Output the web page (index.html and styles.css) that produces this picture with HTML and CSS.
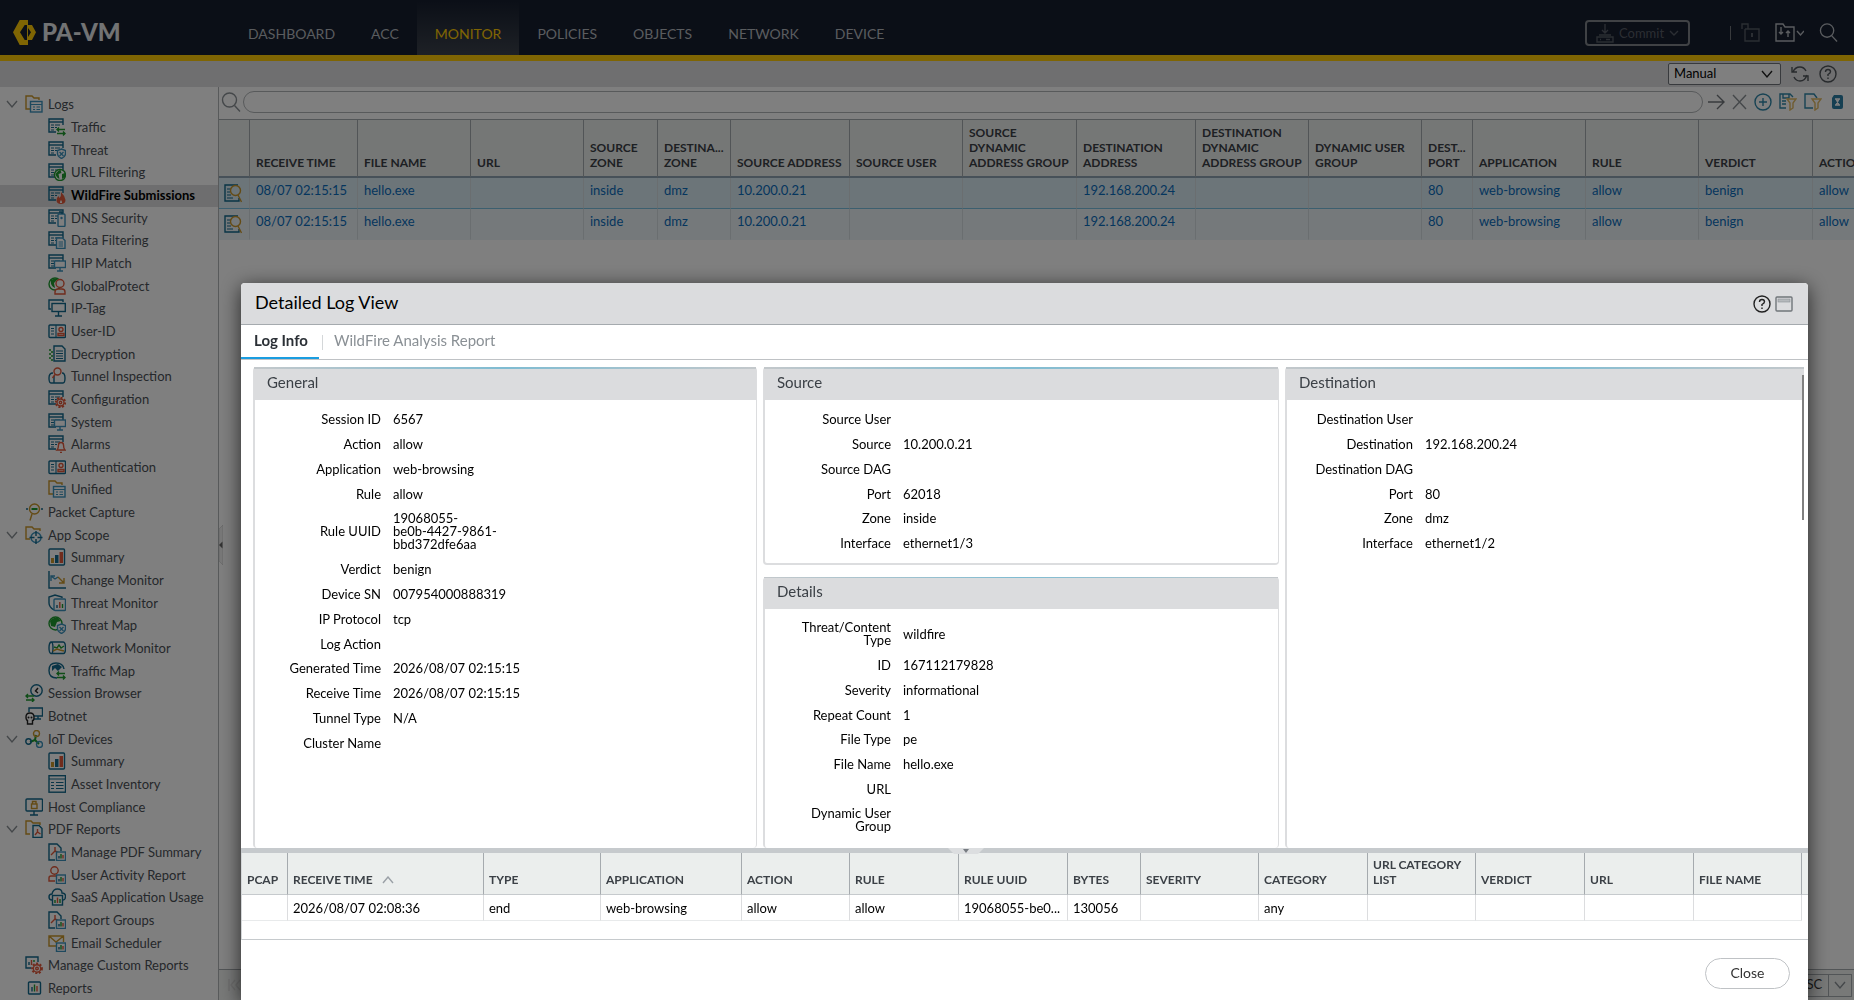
FILE: index.html
```html
<!DOCTYPE html>
<html lang="en">
<head>
<meta charset="utf-8">
<title>PA-VM - Monitor</title>
<link rel="stylesheet" href="styles.css">
</head>
<body>
<svg class="sprite" aria-hidden="true">
  <symbol id="base" viewBox="0 0 18 18"><path d="M8 14H1V1h14v6" class="s teal"/><path d="M1 4h14" class="s teal"/><path d="M3 7h3M7 7h5M3 9.500h3M7 9.500h2M3 12h3" class="s teal thin"/></symbol>
  <symbol id="i-folderlog" viewBox="0 0 18 18"><path d="M5 14H1V1h6l2 2h5v2" class="s gold"/><rect x="5.500" y="6.500" width="11.500" height="10.500" class="s sky"/><path d="M5.500 9.500H17M8 12h2M11.500 12H15M8 14.500h2M11.500 14.500H15" class="s sky thin"/></symbol>
  <symbol id="i-traffic" viewBox="0 0 18 18"><use href="#base"/><path d="M17 11.500H9M11 9.500l-2 2 2 2M9 15.500h8M15 13.500l2 2-2 2" class="s green"/></symbol>
  <symbol id="i-threat" viewBox="0 0 18 18"><use href="#base"/><path d="M13.500 8l4 1.500v3q0 3-4 5-4-2-4-5v-3z" class="s sky white"/><path d="M11.500 11l4 4M15.500 11l-4 4" class="s sky"/></symbol>
  <symbol id="i-url" viewBox="0 0 18 18"><use href="#base"/><circle cx="12" cy="12" r="5.500" class="s green white"/><path d="M7.500 11q3-4 5-4l1 3-3 1 1 5q-3-1-4-5zM14 11l3-1v4l-3 2z" class="f-green"/></symbol>
  <symbol id="i-wildfire" viewBox="0 0 18 18"><use href="#base"/><path d="M13 6q4 4 4.500 8 0 4-4.500 4-4.500 0-4.500-4 0-2 2-4l1 2q2-2 1.500-6z" class="f-red"/><path d="M13 14q1 1 1 3h-2q0-2 1-3z" class="f-white"/></symbol>
  <symbol id="i-dns" viewBox="0 0 18 18"><use href="#base"/><rect x="10" y="5" width="7" height="12.500" rx="1" class="s sky white"/><circle cx="13.500" cy="9" r="1.200" class="f-sky"/><path d="M11 3h3v2" class="s teal"/></symbol>
  <symbol id="i-data" viewBox="0 0 18 18"><use href="#base"/><path d="M8.500 7h6L17 9.500v8H8.500z" class="s sky white"/><path d="M10.500 11H15M10.500 13H15M10.500 15H15" class="s sky thin"/></symbol>
  <symbol id="i-hip" viewBox="0 0 18 18"><use href="#base"/><rect x="6.500" y="7" width="11" height="6.500" class="s sky white"/><path d="M12 13.500V17M9 17h6" class="s sky"/></symbol>
  <symbol id="i-gp" viewBox="0 0 18 18"><circle cx="7" cy="7" r="6" class="s green"/><path d="M3 3q4-2 7-1L6 6l1 5q-5-2-4-8z" class="f-green"/><circle cx="12" cy="6.500" r="4" class="s red white"/><path d="M7 17v-2q0-3 3-3h4q3 0 3 3v2z" class="s red white"/></symbol>
  <symbol id="i-iptag" viewBox="0 0 18 18"><path d="M3 10H1V1h14v2" class="s teal"/><rect x="4" y="4.500" width="13.300" height="8" class="s teal"/><path d="M10.500 12.500V17M7 17h7" class="s teal"/></symbol>
  <symbol id="i-userid" viewBox="0 0 18 18"><rect x="1" y="3" width="16.500" height="12.500" rx="1" class="s teal"/><path d="M8 3v12.500M3 6.500h3M3 9h3M3 12h3" class="s teal thin"/><circle cx="13" cy="7.500" r="2" class="s red"/><path d="M10 13.500v-2h6v2z" class="s red"/></symbol>
  <symbol id="i-decrypt" viewBox="0 0 18 18"><path d="M6 1h8l3 3v12H6z" class="s teal"/><path d="M8 6h7M8 8.500h7M8 11h7M8 13.500h7" class="s teal thin"/><path d="M1 5h2M3 7h2M1 9h2M3 11h2M1 13h2M3 15h2" class="s green"/></symbol>
  <symbol id="i-tunnel" viewBox="0 0 18 18"><path d="M5 6q-4 0-4 5t2 5h12q2 0 2-5t-3-5M6 16V9" class="s teal"/><circle cx="9.500" cy="4.500" r="3.500" class="s red"/><path d="M7 7.500L4.500 11" class="s red"/></symbol>
  <symbol id="i-config" viewBox="0 0 18 18"><use href="#base"/><circle cx="12.500" cy="12.500" r="4.700" class="s red white dash"/><circle cx="12.500" cy="12.500" r="3.500" class="s red"/><circle cx="12.500" cy="12.500" r="1.200" class="s red"/></symbol>
  <symbol id="i-alarm" viewBox="0 0 18 18"><use href="#base"/><path d="M9 15q1.500-1.500 1.500-5 0-2.500 2.500-2.500t2.500 2.500q0 3.500 1.500 5zM12 17.500h2" class="s red white"/></symbol>
  <symbol id="i-packet" viewBox="0 0 18 18"><circle cx="9.500" cy="6" r="5" class="s gold"/><path d="M7 11L5 17.500" class="s gold"/><path d="M6.500 6h6" class="s green wide"/><path d="M1 6h2M16 6h2" class="s teal"/></symbol>
  <symbol id="i-scope" viewBox="0 0 18 18"><path d="M5 13H1V1h6l2 2h6v2" class="s gold"/><circle cx="11" cy="11.500" r="5" class="s sky"/><path d="M11 5v5M11 13v5M4.500 11.500h5M12.500 11.500h5" class="s teal"/></symbol>
  <symbol id="i-summary" viewBox="0 0 18 18"><rect x="1" y="1" width="15.500" height="16" rx="1" class="s teal"/><path d="M3 10h3v5H3z" class="f-gold"/><path d="M7 7h3.500v8H7z" class="f-teal"/><path d="M11.500 4H15v11h-3.500z" class="f-red"/></symbol>
  <symbol id="i-change" viewBox="0 0 18 18"><path d="M1 0v17h17" class="s teal"/><path d="M3 10V5h4M3 5l4 3 3-2" class="s sky"/><path d="M10 6l6 6M16 7v5h-5" class="s gold"/></symbol>
  <symbol id="i-tmon" viewBox="0 0 18 18"><path d="M6 16q-5-3-5-7V3l6-2 7 2v1" class="s teal"/><rect x="6" y="5" width="11.500" height="11.500" rx="1" class="s sky"/><path d="M9 14v-3" class="s teal"/><path d="M11.800 14V8" class="s red"/><path d="M14.500 14v-4" class="s green"/></symbol>
  <symbol id="i-tmap" viewBox="0 0 18 18"><circle cx="7.500" cy="7.500" r="6.500" class="s green"/><path d="M2 5q3-4 8-3l3 3-4 1-2 5-4-1z" class="f-green"/><path d="M13.500 8l4 1.500v3q0 3-4 5-4-2-4-5v-3z" class="s sky white"/><path d="M11.500 11l4 4M15.500 11l-4 4" class="s sky"/></symbol>
  <symbol id="i-nmon" viewBox="0 0 18 18"><path d="M3 3h12q2.500 0 2.500 6T15 14.500H3Q1 14 1 9t2-6q2 0 2 6t-2 5.500" class="s teal"/><path d="M6 8l3 1 2-3 2 3 3-2" class="s green"/><path d="M5 12l4-2 3 1 4 1" class="s gold"/></symbol>
  <symbol id="i-trmap" viewBox="0 0 18 18"><path d="M9 16Q1 16 1 8.500T8 1q7 0 8 6" class="s teal"/><path d="M4 4l6-2 4 3-4 4-3-3-3 3z" class="f-teal"/><path d="M17 11.500H9M11 9.500l-2 2 2 2M9 15.500h8M15 13.500l2 2-2 2" class="s green"/></symbol>
  <symbol id="i-session" viewBox="0 0 18 18"><circle cx="11.500" cy="6.500" r="5.700" class="s teal"/><path d="M13 4l-2.500 3 2.500 2" class="s dark"/><path d="M9 12H1M3 10l-2 2 2 2M1 16h8M7 14l2 2-2 2" class="s green"/></symbol>
  <symbol id="i-botnet" viewBox="0 0 18 18"><path d="M4 5V1h13.500v8H9M13 9v3M9 12h7" class="s teal"/><path d="M1 10q0-4 4-4t4 4-1.500 3.500V17h-5v-3.500Q1 13 1 10z" class="s dark white"/><circle cx="3.500" cy="10.500" r="1" class="f-dark"/><circle cx="6.500" cy="10.500" r="1" class="f-dark"/></symbol>
  <symbol id="i-iot" viewBox="0 0 18 18"><path d="M11 5l-1 5-5 2M10 10l4 4" class="s green wide"/><circle cx="11.500" cy="3.500" r="3" class="s gold"/><circle cx="3.500" cy="11.500" r="2.700" class="s teal"/><circle cx="14.500" cy="14.500" r="3" class="s sky"/></symbol>
  <symbol id="i-asset" viewBox="0 0 18 18"><rect x="1" y="0.700" width="16.500" height="16.500" class="s teal"/><path d="M1 4h16.500M3 7.500h3M8 7.500h7.500M3 10.500h3M8 10.500h7.500M3 13.500h3M8 13.500h7.500" class="s teal thin"/></symbol>
  <symbol id="i-host" viewBox="0 0 18 18"><rect x="1" y="1" width="16.500" height="12" rx="1" class="s teal"/><path d="M9 13v4M5 17h8" class="s teal"/><rect x="6.500" y="6" width="5.500" height="4.500" class="s gold"/><path d="M7.500 6V3.500h3.500V6" class="s gold"/></symbol>
  <symbol id="i-pdf" viewBox="0 0 18 18"><path d="M5 14H1V1h5l2 2h7v2" class="s gold"/><path d="M8 5.500h6l3 3v9H8z" class="s teal white"/><path d="M10 15l2.500-3v-3M12.500 12l3 2" class="s red"/></symbol>
  <symbol id="minichart" viewBox="0 0 18 18"><rect x="8.500" y="9" width="9" height="8.500" class="s sky white"/><path d="M11 15.500V13" class="s teal"/><path d="M13 15.500V11" class="s green"/><path d="M15 15.500V12" class="s red"/></symbol>
  <symbol id="i-mpdf" viewBox="0 0 18 18"><path d="M7 17H1V1h8l4 4v3" class="s teal"/><path d="M3 12l4-4V4M7 8l4 2" class="s red"/><use href="#minichart"/></symbol>
  <symbol id="i-uar" viewBox="0 0 18 18"><circle cx="6.500" cy="4.500" r="3.700" class="s red"/><path d="M7 15H1v-3q0-2 2-2h5" class="s red"/><use href="#minichart"/></symbol>
  <symbol id="i-saas" viewBox="0 0 18 18"><path d="M4 12Q1 12 1 9t3-3q1-5 5.500-5T14 5q3.500 0 3.500 3.500T15 12" class="s teal"/><rect x="4.500" y="7.500" width="10" height="9.500" class="s teal"/><path d="M7 15v-3" class="s green"/><path d="M9.500 15V9.500" class="s red"/><path d="M12 15v-4" class="s green"/></symbol>
  <symbol id="i-mail" viewBox="0 0 18 18"><path d="M8 12H1V2h14.500v6M1 2l7 6 7.500-6" class="s gold"/><use href="#minichart"/></symbol>
  <symbol id="i-custom" viewBox="0 0 18 18"><path d="M6 12H1V1h12v5" class="s teal"/><path d="M4 9V6" class="s teal"/><path d="M6.500 9V4" class="s red"/><path d="M9 6V4" class="s green"/><circle cx="12" cy="12.500" r="4.900" class="s red dash"/><circle cx="12" cy="12.500" r="3.700" class="s red"/><circle cx="12" cy="12.500" r="1.300" class="s red"/></symbol>
  <symbol id="i-reports" viewBox="0 0 18 18"><rect x="3.500" y="3" width="12" height="12" rx="1" class="s teal"/><path d="M7 12.500V8" class="s teal"/><path d="M9.500 12.500v-7" class="s green"/><path d="M12 12.500V7" class="s red"/></symbol>
  <symbol id="i-chev" viewBox="0 0 12 12"><path d="M1 3l5 6 5-6" class="s grey"/></symbol>
  <symbol id="i-detail" viewBox="0 0 18 20"><path d="M15 15v3H1V2h13" class="s teal"/><path d="M3 6h4M3 9h3M3 12h4M3 15h6" class="s teal thin"/><circle cx="11.500" cy="7.500" r="5" class="s gold"/><path d="M14 12l3.500 7" class="s gold"/></symbol>
  <symbol id="i-search" viewBox="0 0 20 20"><circle cx="8.500" cy="8" r="7" class="s cur"/><path d="M13.500 13.500l5.500 6" class="s cur"/></symbol>
</svg>

<div class="app">
  <header class="top">
    <a class="logo" href="#" aria-label="PA-VM">
      <svg width="24" height="25" viewBox="0 0 24 25"><path d="M6.700 0H15v5h-3.300L7 12.300 11.700 20H15v5H6.700L0 12.300zM15 5h4l4 7.300-4 7.700h-4v-3l3-4.700-3-4.300z" fill="#ffcb06"/><path d="M14.500 5v15" stroke="#ffcb06"/></svg>
      <span>PA-VM</span>
    </a>
    <nav class="tabs">
      <a href="#">DASHBOARD</a><a href="#">ACC</a><a href="#" class="on">MONITOR</a><a href="#">POLICIES</a><a href="#">OBJECTS</a><a href="#">NETWORK</a><a href="#">DEVICE</a>
    </nav>
    <button class="commit" type="button"><svg width="18" height="20" viewBox="0 0 18 20"><path d="M9 1v9M6 7l3 3 3-3M3 12h12M1 14h16v5H1zM4 16.500h1M10 16.500h4" class="s cur"/></svg>Commit<svg width="10" height="6" viewBox="0 0 10 6"><path d="M1 1l4 4 4-4" class="s cur"/></svg></button>
    <div class="tools">
      <span class="bar"></span>
      <svg class="dim" width="19" height="19" viewBox="0 0 19 19"><path d="M1 6V1h6v5M4 6h14v12H4V6" class="s cur"/><path d="M11 10v4" class="s cur wide"/></svg>
      <svg width="29" height="19" viewBox="0 0 29 19"><path d="M1 18V1h7l2 3h9v14zM6 4v7M4 9l2 2 2-2M13 14V8M11 10l2-2 2 2M22 8l3.500 4L29 8" class="s cur"/></svg>
      <svg width="19" height="19"><use href="#i-search"/></svg>
    </div>
  </header>
  <div class="strip">
    <label class="combo"><select aria-label="Refresh interval"><option>Manual</option></select><svg width="12" height="12" viewBox="0 0 12 12"><path d="M1 3l5 6 5-6" class="s dark"/></svg></label>
    <svg width="18" height="18" viewBox="0 0 18 18"><path d="M2 7q2-5 7-5 4 0 6 4M1 2v5h5M16 10q-2 6-7 6-4 0-6-4M17 16v-5h-5" class="s slate"/></svg>
    <svg width="18" height="18" viewBox="0 0 18 18"><circle cx="9" cy="9" r="8" class="s slate"/><path d="M6.500 7q0-2.500 2.500-2.500t2.500 2.200Q11.500 8 9 9.500v1.500M9 12.500v1.500" class="s slate"/></svg>
  </div>
  <div class="main">
    <aside class="side">
      <ul>
        <li><a href="#"><svg class="ch"><use href="#i-chev"/></svg><svg class="ic"><use href="#i-folderlog"/></svg>Logs</a></li>
        <li class="l2"><a href="#"><svg class="ic"><use href="#i-traffic"/></svg>Traffic</a></li>
        <li class="l2"><a href="#"><svg class="ic"><use href="#i-threat"/></svg>Threat</a></li>
        <li class="l2"><a href="#"><svg class="ic"><use href="#i-url"/></svg>URL Filtering</a></li>
        <li class="l2 on"><a href="#"><svg class="ic"><use href="#i-wildfire"/></svg>WildFire Submissions</a></li>
        <li class="l2"><a href="#"><svg class="ic"><use href="#i-dns"/></svg>DNS Security</a></li>
        <li class="l2"><a href="#"><svg class="ic"><use href="#i-data"/></svg>Data Filtering</a></li>
        <li class="l2"><a href="#"><svg class="ic"><use href="#i-hip"/></svg>HIP Match</a></li>
        <li class="l2"><a href="#"><svg class="ic"><use href="#i-gp"/></svg>GlobalProtect</a></li>
        <li class="l2"><a href="#"><svg class="ic"><use href="#i-iptag"/></svg>IP-Tag</a></li>
        <li class="l2"><a href="#"><svg class="ic"><use href="#i-userid"/></svg>User-ID</a></li>
        <li class="l2"><a href="#"><svg class="ic"><use href="#i-decrypt"/></svg>Decryption</a></li>
        <li class="l2"><a href="#"><svg class="ic"><use href="#i-tunnel"/></svg>Tunnel Inspection</a></li>
        <li class="l2"><a href="#"><svg class="ic"><use href="#i-config"/></svg>Configuration</a></li>
        <li class="l2"><a href="#"><svg class="ic"><use href="#i-hip"/></svg>System</a></li>
        <li class="l2"><a href="#"><svg class="ic"><use href="#i-alarm"/></svg>Alarms</a></li>
        <li class="l2"><a href="#"><svg class="ic"><use href="#i-userid"/></svg>Authentication</a></li>
        <li class="l2"><a href="#"><svg class="ic"><use href="#i-folderlog"/></svg>Unified</a></li>
        <li class="l1"><a href="#"><svg class="ic"><use href="#i-packet"/></svg>Packet Capture</a></li>
        <li><a href="#"><svg class="ch"><use href="#i-chev"/></svg><svg class="ic"><use href="#i-scope"/></svg>App Scope</a></li>
        <li class="l2"><a href="#"><svg class="ic"><use href="#i-summary"/></svg>Summary</a></li>
        <li class="l2"><a href="#"><svg class="ic"><use href="#i-change"/></svg>Change Monitor</a></li>
        <li class="l2"><a href="#"><svg class="ic"><use href="#i-tmon"/></svg>Threat Monitor</a></li>
        <li class="l2"><a href="#"><svg class="ic"><use href="#i-tmap"/></svg>Threat Map</a></li>
        <li class="l2"><a href="#"><svg class="ic"><use href="#i-nmon"/></svg>Network Monitor</a></li>
        <li class="l2"><a href="#"><svg class="ic"><use href="#i-trmap"/></svg>Traffic Map</a></li>
        <li class="l1"><a href="#"><svg class="ic"><use href="#i-session"/></svg>Session Browser</a></li>
        <li class="l1"><a href="#"><svg class="ic"><use href="#i-botnet"/></svg>Botnet</a></li>
        <li><a href="#"><svg class="ch"><use href="#i-chev"/></svg><svg class="ic"><use href="#i-iot"/></svg>IoT Devices</a></li>
        <li class="l2"><a href="#"><svg class="ic"><use href="#i-summary"/></svg>Summary</a></li>
        <li class="l2"><a href="#"><svg class="ic"><use href="#i-asset"/></svg>Asset Inventory</a></li>
        <li class="l1"><a href="#"><svg class="ic"><use href="#i-host"/></svg>Host Compliance</a></li>
        <li><a href="#"><svg class="ch"><use href="#i-chev"/></svg><svg class="ic"><use href="#i-pdf"/></svg>PDF Reports</a></li>
        <li class="l2"><a href="#"><svg class="ic"><use href="#i-mpdf"/></svg>Manage PDF Summary</a></li>
        <li class="l2"><a href="#"><svg class="ic"><use href="#i-uar"/></svg>User Activity Report</a></li>
        <li class="l2"><a href="#"><svg class="ic"><use href="#i-saas"/></svg>SaaS Application Usage</a></li>
        <li class="l2"><a href="#"><svg class="ic"><use href="#i-mpdf"/></svg>Report Groups</a></li>
        <li class="l2"><a href="#"><svg class="ic"><use href="#i-mail"/></svg>Email Scheduler</a></li>
        <li class="l1"><a href="#"><svg class="ic"><use href="#i-custom"/></svg>Manage Custom Reports</a></li>
        <li class="l1"><a href="#"><svg class="ic"><use href="#i-reports"/></svg>Reports</a></li>
      </ul>
      <button class="fold" type="button" aria-label="Collapse sidebar"><svg width="4" height="40" viewBox="0 0 4 40"><path d="M0 4l4-4v40l-4-4z" fill="#f0f0f0" stroke="#c8c8c8" stroke-width=".6"/><path d="M3.500 16.500v7L0 20z" fill="#666"/></svg></button>
    </aside>
    <section class="content">
      <div class="filter">
        <svg class="mag" width="20" height="20"><use href="#i-search"/></svg>
        <input type="text" aria-label="Filter">
        <svg width="17" height="18" viewBox="0 0 17 18"><path d="M0 9h16M9 2l7 7-7 7" class="s steel"/></svg>
        <svg width="15" height="18" viewBox="0 0 15 18"><path d="M1 2l13 14M14 2L1 16" class="s grey"/></svg>
        <svg width="18" height="18" viewBox="0 0 18 18"><circle cx="9" cy="9" r="8" class="s tealb"/><path d="M9 5v8M5 9h8" class="s tealb"/></svg>
        <svg width="18" height="18" viewBox="0 0 18 18"><path d="M7 15H1V1h10l3 3M4 1v4h6V1M3 8h4M3 11h4" class="s tealb"/><path d="M8 6h9l-3 4v5l-3 2v-7z" class="s goldb white"/></svg>
        <svg width="18" height="18" viewBox="0 0 18 18"><path d="M9 15H1V1h9l3 4" class="s tealb"/><path d="M8 6h9l-3 4v5l-3 2v-7z" class="s goldb white"/></svg>
        <svg class="xl" width="11" height="14" viewBox="0 0 11 14"><path d="M0 3l2-3h7q2 0 2 2v10q0 2-2 2H2q-2 0-2-2z" class="f-tealb"/><path d="M3 4h5M3 10h5M4 4l3 6M7 4l-3 6" class="s" stroke="#fff"/></svg>
      </div>
      <div class="logs">
        <table>
          <colgroup><col style="width:31px"><col style="width:108px"><col style="width:113px"><col style="width:113px"><col style="width:74px"><col style="width:73px"><col style="width:119px"><col style="width:113px"><col style="width:114px"><col style="width:119px"><col style="width:113px"><col style="width:113px"><col style="width:51px"><col style="width:113px"><col style="width:113px"><col style="width:114px"><col style="width:113px"></colgroup>
          <thead><tr><th></th><th>Receive Time</th><th>File Name</th><th>URL</th><th>Source<br>Zone</th><th title="Destination Zone">Destina...<br>Zone</th><th>Source Address</th><th>Source User</th><th>Source<br>Dynamic<br>Address Group</th><th>Destination<br>Address</th><th>Destination<br>Dynamic<br>Address Group</th><th>Dynamic User<br>Group</th><th title="Destination Port">Dest...<br>Port</th><th>Application</th><th>Rule</th><th>Verdict</th><th>Action</th></tr></thead>
          <tbody>
            <tr><td><svg class="dt"><use href="#i-detail"/></svg></td><td>08/07 02:15:15</td><td>hello.exe</td><td></td><td>inside</td><td>dmz</td><td>10.200.0.21</td><td></td><td></td><td>192.168.200.24</td><td></td><td></td><td>80</td><td>web-browsing</td><td>allow</td><td>benign</td><td>allow</td></tr>
            <tr><td><svg class="dt"><use href="#i-detail"/></svg></td><td>08/07 02:15:15</td><td>hello.exe</td><td></td><td>inside</td><td>dmz</td><td>10.200.0.21</td><td></td><td></td><td>192.168.200.24</td><td></td><td></td><td>80</td><td>web-browsing</td><td>allow</td><td>benign</td><td>allow</td></tr>
          </tbody>
        </table>
      </div>
      <div class="pager">
        <svg width="14" height="14" viewBox="0 0 14 14"><path d="M1 1v12M7 2L3 7l4 5M12 2L8 7l4 5" class="s" stroke="#dcdcdc"/></svg>
        <label class="order"><select aria-label="Sort order"><option>DESC</option></select><svg width="12" height="12"><use href="#i-chev"/></svg></label>
      </div>
    </section>
  </div>
</div>

<div class="mask">
  <div class="modal" role="dialog" aria-labelledby="dlg">
    <div class="head">
      <h1 id="dlg">Detailed Log View</h1>
      <svg width="18" height="18" viewBox="0 0 18 18"><circle cx="9" cy="9" r="8" class="s dark"/><path d="M6.500 7q0-2.500 2.500-2.500t2.500 2.200Q11.500 8 9 9.500v1.500M9 12.500v1.500" class="s dark"/></svg>
      <svg width="18" height="16" viewBox="0 0 18 16"><rect x="1" y="1" width="16" height="14" rx="1" class="s" stroke="#70757a"/><rect x="3" y="3" width="12" height="3" fill="#b5b9bc" stroke="#8a9095" stroke-width=".6"/></svg>
    </div>
    <div class="mtabs"><a href="#" class="on">Log Info</a><a href="#" class="off">WildFire Analysis Report</a></div>
    <div class="panels">
      <section class="panel">
        <h2>General</h2>
        <dl>
          <div><dt>Session ID</dt><dd>6567</dd></div>
          <div><dt>Action</dt><dd>allow</dd></div>
          <div><dt>Application</dt><dd>web-browsing</dd></div>
          <div><dt>Rule</dt><dd>allow</dd></div>
          <div><dt>Rule UUID</dt><dd>19068055-<br>be0b-4427-9861-<br>bbd372dfe6aa</dd></div>
          <div><dt>Verdict</dt><dd>benign</dd></div>
          <div><dt>Device SN</dt><dd>007954000888319</dd></div>
          <div><dt>IP Protocol</dt><dd>tcp</dd></div>
          <div><dt>Log Action</dt><dd></dd></div>
          <div><dt>Generated Time</dt><dd>2026/08/07 02:15:15</dd></div>
          <div><dt>Receive Time</dt><dd>2026/08/07 02:15:15</dd></div>
          <div><dt>Tunnel Type</dt><dd>N/A</dd></div>
          <div><dt>Cluster Name</dt><dd></dd></div>
        </dl>
      </section>
      <div class="stack">
        <section class="panel">
          <h2>Source</h2>
          <dl>
            <div><dt>Source User</dt><dd></dd></div>
            <div><dt>Source</dt><dd>10.200.0.21</dd></div>
            <div><dt>Source DAG</dt><dd></dd></div>
            <div><dt>Port</dt><dd>62018</dd></div>
            <div><dt>Zone</dt><dd>inside</dd></div>
            <div><dt>Interface</dt><dd>ethernet1/3</dd></div>
          </dl>
        </section>
        <section class="panel">
          <h2>Details</h2>
          <dl>
            <div><dt>Threat/Content Type</dt><dd>wildfire</dd></div>
            <div><dt>ID</dt><dd>167112179828</dd></div>
            <div><dt>Severity</dt><dd>informational</dd></div>
            <div><dt>Repeat Count</dt><dd>1</dd></div>
            <div><dt>File Type</dt><dd>pe</dd></div>
            <div><dt>File Name</dt><dd>hello.exe</dd></div>
            <div><dt>URL</dt><dd></dd></div>
            <div><dt>Dynamic User Group</dt><dd></dd></div>
          </dl>
        </section>
      </div>
      <section class="panel last">
        <h2>Destination</h2>
        <dl>
          <div><dt>Destination User</dt><dd></dd></div>
          <div><dt>Destination</dt><dd>192.168.200.24</dd></div>
          <div><dt>Destination DAG</dt><dd></dd></div>
          <div><dt>Port</dt><dd>80</dd></div>
          <div><dt>Zone</dt><dd>dmz</dd></div>
          <div><dt>Interface</dt><dd>ethernet1/2</dd></div>
        </dl>
      </section>
      <span class="thumb"></span>
    </div>
    <div class="split"><svg width="36" height="6" viewBox="0 0 36 6"><path d="M0 0h36l-6 6H6z" fill="#dcdee0"/><path d="M15 1h6l-3 4z" fill="#777c82"/></svg></div>
    <div class="related">
      <table>
        <colgroup><col style="width:46px"><col style="width:196px"><col style="width:117px"><col style="width:141px"><col style="width:108px"><col style="width:109px"><col style="width:109px"><col style="width:73px"><col style="width:118px"><col style="width:109px"><col style="width:108px"><col style="width:109px"><col style="width:109px"><col style="width:108px"><col></colgroup>
        <thead><tr><th>PCAP</th><th>Receive Time<svg width="12" height="8" viewBox="0 0 12 8"><path d="M1 7l5-6 5 6" class="s" stroke="#9aa0a6"/></svg></th><th>Type</th><th>Application</th><th>Action</th><th>Rule</th><th>Rule UUID</th><th>Bytes</th><th>Severity</th><th>Category</th><th>URL Category<br>List</th><th>Verdict</th><th>URL</th><th>File Name</th><th></th></tr></thead>
        <tbody><tr><td></td><td>2026/08/07 02:08:36</td><td>end</td><td>web-browsing</td><td>allow</td><td>allow</td><td title="19068055-be0b-4427-9861-bbd372dfe6aa">19068055-be0...</td><td>130056</td><td></td><td>any</td><td></td><td></td><td></td><td></td><td></td></tr></tbody>
      </table>
    </div>
    <footer class="foot"><button type="button">Close</button></footer>
  </div>
</div>
</body>
</html>
```
FILE: styles.css
```css
* { box-sizing: border-box; }
body { margin: 0; font: 13px/16px Lato, "Liberation Sans", sans-serif; color: #333; overflow: hidden; }
a { color: inherit; text-decoration: none; }
button, input, select { font: inherit; color: inherit; margin: 0; }
ul, dl, dd, h1, h2 { margin: 0; padding: 0; }
svg { flex: none; display: block; }
.sprite { position: absolute; width: 0; height: 0; }

.s { fill: none; stroke-width: 1.4; }
.s.thin { stroke-width: 1.1; }
.s.wide { stroke-width: 2; }
.s.dash { stroke-dasharray: 2 1.6; stroke-width: 2; }
.s.white { fill: #fff; }
.teal { stroke: #12688c; }
.tealb { stroke: #2f86a8; }
.sky { stroke: #3d93bd; }
.gold { stroke: #c9962a; }
.goldb { stroke: #e0b860; }
.green { stroke: #1e9a2e; }
.red { stroke: #e0583a; }
.grey { stroke: #8a9095; }
.steel { stroke: #70757a; }
.slate { stroke: #50555a; }
.dark { stroke: #222; }
.cur { stroke: currentColor; }
.f-green { fill: #1e9a2e; }
.f-red { fill: #e0583a; }
.f-white { fill: #fff; }
.f-sky { fill: #3d93bd; }
.f-gold { fill: #c9962a; }
.f-teal { fill: #12688c; }
.f-tealb { fill: #2a7ea4; }
.f-dark { fill: #222; }

.app { height: 100vh; display: flex; flex-direction: column; background: #fff; }

.top { height: 61px; flex: none; display: flex; align-items: stretch; background: #161e2e; border-bottom: 6px solid #ffcb06; color: #b4b8be; }
.logo { width: 230px; display: flex; align-items: center; gap: 5px; padding: 9px 0 0 13px; color: #e4e6e8; font-size: 24px; font-weight: 900; }
.tabs { display: flex; flex: 1; font-size: 14px; }
.tabs a { padding: 26px 18px 0; }
.tabs .on { color: #ffcb06; background: linear-gradient(#161e2e, #3c424c); }
.commit { align-self: flex-start; margin: 20px 40px 0 0; width: 105px; height: 26px; display: flex; align-items: center; justify-content: center; gap: 5px; background: none; border: 2px solid #80858a; border-radius: 4px; color: #565c66; padding: 0; }
.tools { display: flex; gap: 15px; padding: 23px 16px 0 0; color: #b4b8be; }
.tools .bar { width: 1px; height: 14px; margin: 3px -5px 0 0; background: #70757a; }
.tools .dim { color: #565c66; }

.strip { height: 26px; flex: none; display: flex; align-items: center; justify-content: flex-end; gap: 10px; padding-right: 17px; background: #dedfe1; }
.combo { position: relative; display: flex; align-items: center; }
.combo select { appearance: none; width: 113px; height: 22px; padding: 0 5px 2px; background: #fff; border: 1px solid #70757a; border-radius: 2px; color: #000; }
.combo svg { position: absolute; right: 8px; }

.main { flex: 1; min-height: 0; display: flex; }
.side { position: relative; width: 219px; flex: none; border-right: 1px solid #b0b4b7; padding-top: 7px; display: flex; background: #fff; color: #4b5056; }
.side ul { flex: 1; display: flex; flex-direction: column; list-style: none; }
.side li { flex: 1; min-height: 22px; display: flex; }
.side a { flex: 1; display: flex; align-items: center; gap: 5px; padding: 0 0 2px 6px; white-space: nowrap; }
.side .ch { width: 12px; height: 12px; margin-right: 2px; }
.side .ic { width: 18px; height: 18px; }
.side .l1 a { padding-left: 25px; }
.side .l2 a { padding-left: 48px; }
.side .on { background: #dcdddf; color: #000; font-weight: 700; }
.fold { position: absolute; left: 219px; top: 48%; padding: 0; border: 0; background: none; }

.content { flex: 1; min-width: 0; display: flex; flex-direction: column; }
.filter { height: 32px; flex: none; display: flex; align-items: center; gap: 7px; padding: 0 11px 2px 2px; }
.filter input { flex: 1; height: 22px; margin: 0 -2px 0 -5px; border: 1px solid #b0b4b7; border-radius: 11px; background: #fff; padding: 0 10px; }
.filter .mag { color: #8a9095; }
.filter .xl { margin-left: 3px; }

.logs { flex: 1; min-height: 0; overflow: hidden; }
table { table-layout: fixed; border-collapse: separate; border-spacing: 0; width: 100%; }
th { text-align: left; vertical-align: bottom; font-size: 12px; line-height: 15px; font-weight: 700; text-transform: uppercase; color: #3b4046; background: #ebeeed; border-right: 1px solid #a5aaae; padding: 0 0 5px 6px; white-space: nowrap; }
td { padding: 0 0 0 6px; white-space: nowrap; }
.logs table { width: 1707px; }
.logs th { height: 59px; border-top: 1px solid #a5aaae; border-bottom: 2px solid #8ea3b2; padding-bottom: 6px; }
.logs td { height: 31px; color: #0a6cbc; border-right: 1px solid #d4dce0; border-bottom: 1px solid #78bfde; background: #d8eaf2; padding-bottom: 7px; }
.logs tr:last-child td { background: #ebf3f6; border-bottom-color: #ebf3f6; }
.logs td:first-child { padding: 0 0 0 5px; }
.dt { width: 18px; height: 20px; }

.pager { height: 31px; flex: none; display: flex; align-items: center; justify-content: space-between; padding: 0 2px 0 9px; border-top: 1px solid #a5aaae; background: #f0f2f1; }
.order { display: flex; align-items: center; border: 1px solid #a5aaae; height: 23px; padding-right: 5px; }
.order select { appearance: none; width: 68px; border: 0; border-right: 1px solid #a5aaae; background: none; padding: 0 0 2px 28px; height: 21px; margin-right: 5px; }

.mask { position: fixed; inset: 0; display: flex; padding: 283px 46px 0 241px; background: rgba(0, 0, 0, 0.5); }
.modal { flex: 1; min-width: 0; display: flex; flex-direction: column; background: #fff; border-radius: 4px 4px 0 0; box-shadow: 0 4px 20px rgba(0, 0, 0, 0.7); overflow: hidden; color: #000; }
.head { height: 42px; flex: none; display: flex; align-items: center; gap: 4px; padding: 0 15px 0 14px; background: #dbdcde; border-bottom: 1px solid #a5aaae; }
.head h1 { flex: 1; font-size: 18px; line-height: 22px; font-weight: 400; padding-bottom: 3px; }
.mtabs { height: 35px; flex: none; display: flex; border-bottom: 1px solid #bfc2c5; font-size: 15px; line-height: 18px; color: #8a9095; }
.mtabs .on { padding: 6px 11px 0 13px; color: #2b3036; font-weight: 700; border-bottom: 2px solid #1a9de0; }
.mtabs .off { margin: 10px 0 9px 3px; padding-left: 11px; border-left: 1px solid #d4d7d9; line-height: 10px; }

.panels { position: relative; flex: 1; min-height: 0; overflow: hidden; display: grid; grid-template-columns: 504fr 516fr 519fr; gap: 6px; padding: 7px 4px 0 12px; }
.stack { display: flex; flex-direction: column; gap: 12px; }
.panel { border: solid #dcdddf; border-width: 0 1px 2px 2px; border-radius: 4px; }
.panels > .panel { border-bottom: 0; }
.panel.last { border-right: 0; }
.stack .panel:last-child { flex: 1; border-bottom: 0; }
.panel h2 { height: 33px; margin-left: -1px; padding: 4px 0 0 13px; font-size: 15px; line-height: 18px; font-weight: 400; color: #3b4046; background: #dbdcde; border-top: 2px solid; border-image: linear-gradient(90deg, #c4c8cb, #7fbcd2, #c4c8cb) 1; }
.panel + .panel h2 { height: 32px; border-top-width: 1px; }
.panel dl { padding: 6px 0 8px; line-height: 13px; }
.panel dl div { display: flex; align-items: center; min-height: 25px; padding: 6px 0 5px; }
.panel dl div:nth-child(5n) { min-height: 24px; }
.panel dt { width: 101px; margin-left: 25px; text-align: right; }
.panel dd { margin-left: 12px; }
.thumb { position: absolute; right: 4px; top: 15px; width: 2px; height: 145px; background: #808080; }

.split { height: 5px; flex: none; display: flex; justify-content: center; background: #c6cacd; }
.split svg { margin-right: 118px; z-index: 1; }
.related { height: 87px; flex: none; border-bottom: 1px solid #c6cacd; border-left: 1px solid #d4d7d9; }
.related th { height: 42px; border-bottom: 1px solid #c6cacd; padding: 0 0 7px 5px; }
.related th svg { display: inline-block; margin-left: 9px; }
.related td { height: 26px; padding-left: 5px; border-right: 1px solid #dcdddf; border-bottom: 1px solid #e8eaeb; }
.related td:last-child, .related th:last-child { border-right: 0; padding: 0; }
.related td:last-child { border-bottom: 0; }
.foot { height: 60px; flex: none; display: flex; justify-content: flex-end; padding: 18px 18px 0 0; }
.foot button { width: 85px; height: 31px; padding: 0 0 2px; border: 1px solid #bfc2c5; border-radius: 16px; background: #fff; color: #333; font-size: 14px; }
```
